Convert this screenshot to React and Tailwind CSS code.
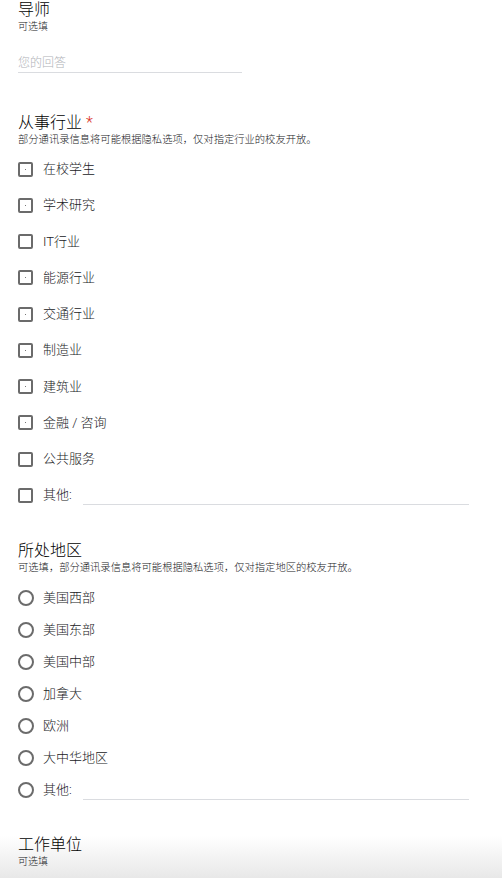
import React from "react";

const industries = [
  { label: "在校学生", dot: true },
  { label: "学术研究", dot: true },
  { label: "IT行业", dot: false },
  { label: "能源行业", dot: true },
  { label: "交通行业", dot: true },
  { label: "制造业", dot: true },
  { label: "建筑业", dot: true },
  { label: "金融 / 咨询", dot: true },
  { label: "公共服务", dot: false },
];

const regions = ["美国西部", "美国东部", "美国中部", "加拿大", "欧洲", "大中华地区"];

function Checkbox({ dot }) {
  return (
    <div className="w-[15px] h-[15px] border-2 border-[#6b6b6b] rounded-[2px] flex items-center justify-center shrink-0">
      {dot && <div className="w-[1px] h-[1px] bg-[#777]" />}
    </div>
  );
}

function Radio() {
  return <div className="w-[16px] h-[16px] border-2 border-[#6b6b6b] rounded-full shrink-0" />;
}

export default function App() {
  return (
    <div className="relative min-h-[878px] bg-white text-[#202124] font-light font-['Roboto','Noto_Sans_CJK_SC',sans-serif]">
      <div className="absolute left-0 right-0 bottom-0 h-[42px] bg-gradient-to-b from-white/0 to-[#e8e8e8] pointer-events-none" />
      <div className="relative px-[18px]">
        {/* 导师 */}
        <div className="text-[16px] leading-[20px] text-black">导师</div>
        <div className="text-[10px] leading-[14px]">可选填</div>
        <div className="w-[224px] mt-[21px] border-b border-[#dadce0] pb-[1px]">
          <div className="text-[12px] leading-[16px] text-[#b0b3b8]">您的回答</div>
        </div>

        {/* 从事行业 */}
        <div className="mt-[40px] text-[16px] leading-[20px] text-black">
          从事行业 <span className="text-[#d93025]">*</span>
        </div>
        <div className="text-[10.3px] leading-[14px]">部分通讯录信息将可能根据隐私选项，仅对指定行业的校友开放。</div>
        <div className="mt-[4px] flex flex-col">
          {industries.map((it) => (
            <div key={it.label} className="h-[36.25px] flex items-center gap-[10px]">
              <Checkbox dot={it.dot} />
              <span className="text-[13px] leading-[16px]">{it.label}</span>
            </div>
          ))}
          <div className="h-[36.25px] flex items-center gap-[10px]">
            <Checkbox dot={false} />
            <span className="text-[13px] leading-[16px]">其他:</span>
            <div className="w-[386px] ml-[1px] h-[18px] mt-[2px] border-b border-[#dadce0]" />
          </div>
        </div>

        {/* 所处地区 */}
        <div className="mt-[27px] text-[16px] leading-[20px] text-black">所处地区</div>
        <div className="text-[10.3px] leading-[14px]">可选填，部分通讯录信息将可能根据隐私选项，仅对指定地区的校友开放。</div>
        <div className="mt-[7px] flex flex-col">
          {regions.map((r) => (
            <div key={r} className="h-[32px] flex items-center gap-[9px] pt-[1px]">
              <Radio />
              <span className="text-[13px] leading-[16px]">{r}</span>
            </div>
          ))}
          <div className="h-[32px] flex items-center gap-[9px] pt-[1px]">
            <Radio />
            <span className="text-[13px] leading-[16px]">其他:</span>
            <div className="w-[386px] ml-[2px] h-[18px] mt-[2px] border-b border-[#dadce0]" />
          </div>
        </div>

        {/* 工作单位 */}
        <div className="mt-[29px] text-[16px] leading-[20px] text-black">工作单位</div>
        <div className="text-[10px] leading-[14px]">可选填</div>
      </div>
    </div>
  );
}
